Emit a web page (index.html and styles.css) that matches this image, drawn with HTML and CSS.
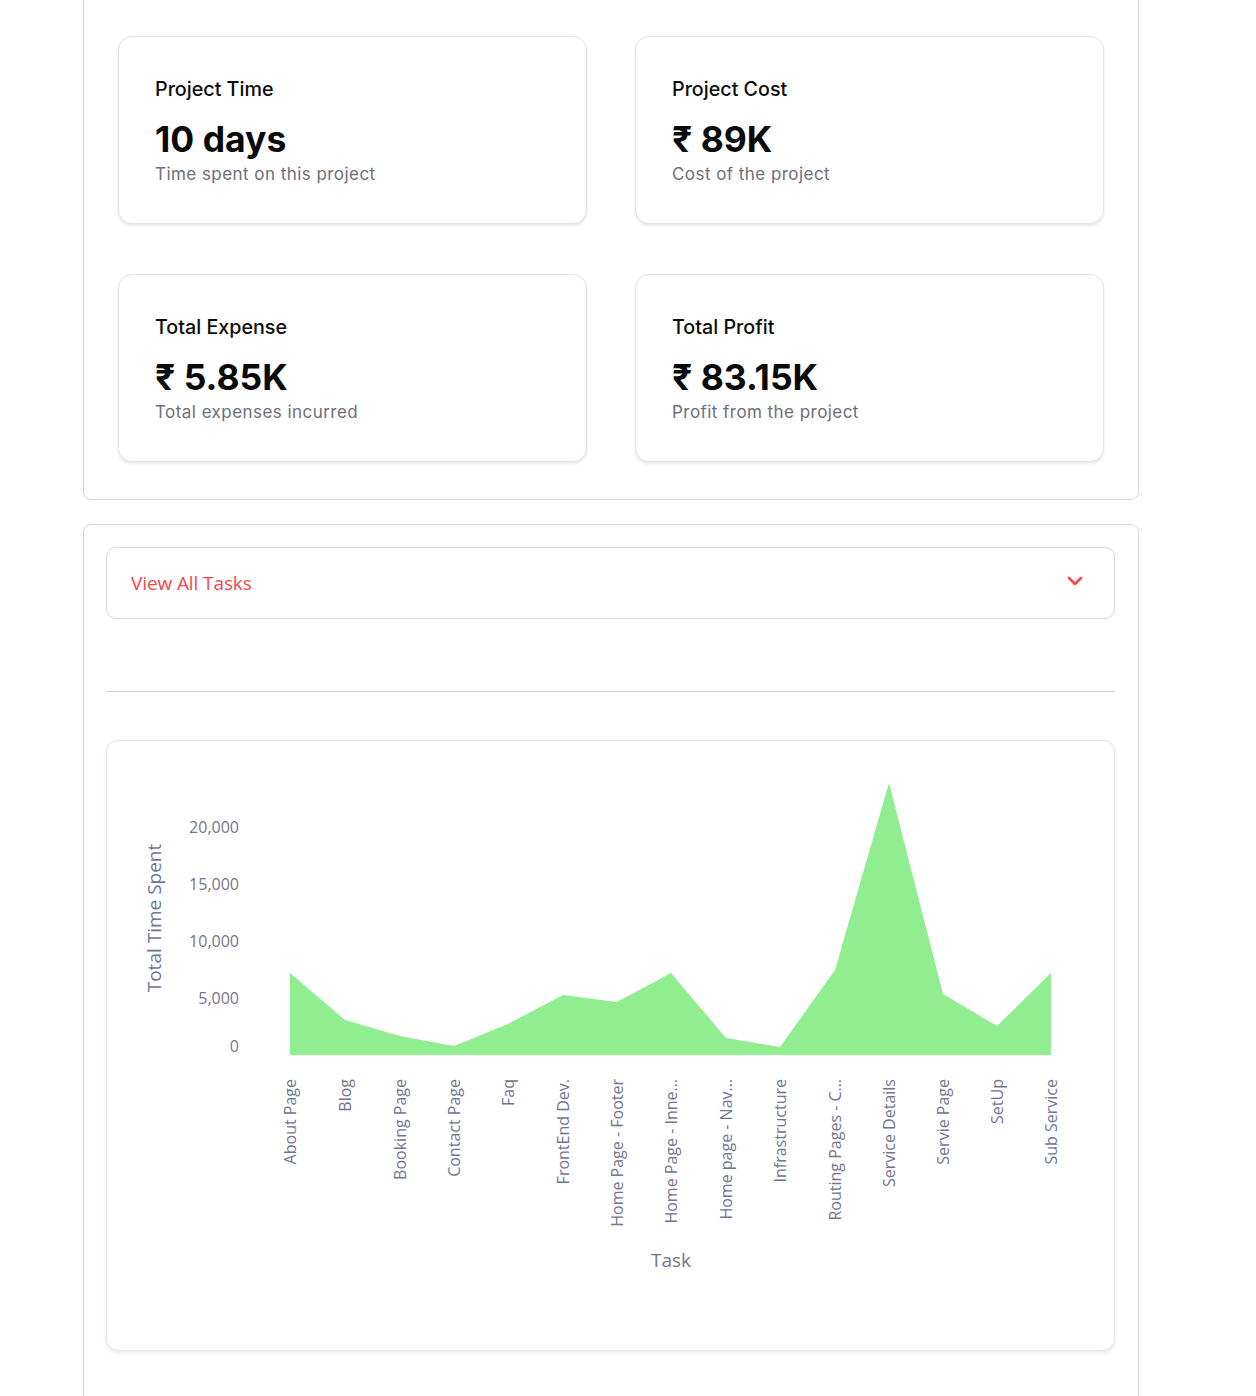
FILE: index.html
```html
<!DOCTYPE html>
<html lang="en">
<head>
<meta charset="utf-8">
<title>Project Overview</title>
<link rel="stylesheet" href="styles.css">
</head>
<body>
<div class="page">
  <section class="panel stats">
    <div class="card">
      <div class="card-title">Project Time</div>
      <div class="card-value">10 days</div>
      <div class="card-sub">Time spent on this project</div>
    </div>
    <div class="card">
      <div class="card-title">Project Cost</div>
      <div class="card-value">₹ 89K</div>
      <div class="card-sub">Cost of the project</div>
    </div>
    <div class="card">
      <div class="card-title">Total Expense</div>
      <div class="card-value">₹ 5.85K</div>
      <div class="card-sub">Total expenses incurred</div>
    </div>
    <div class="card">
      <div class="card-title">Total Profit</div>
      <div class="card-value">₹ 83.15K</div>
      <div class="card-sub">Profit from the project</div>
    </div>
  </section>

  <section class="panel tasks">
    <div class="dropdown">
      <span class="dropdown-label">View All Tasks</span>
      <svg class="chevron" width="16" height="10" viewBox="0 0 16 10"><path d="M2 2 L8 8 L14 2" fill="none" stroke="#f5474d" stroke-width="2.6" stroke-linecap="round" stroke-linejoin="round"/></svg>
    </div>
    <hr class="divider">
    <div class="chart-card">
      <svg class="chart" width="1008" height="609" viewBox="0 0 1008 609">
        <polygon class="area" points="183,232 238,279 293,295 347,305 401,283 456,254 510,261 564,232 619,297 673,306 728,229 782,42 836,253 890,285 944,232 944,314 183,314"/>
        <g class="yticks">
          <text x="132" y="92">20,000</text>
          <text x="132" y="149">15,000</text>
          <text x="132" y="206">10,000</text>
          <text x="132" y="263">5,000</text>
          <text x="132" y="311">0</text>
        </g>
        <text class="axis-title" transform="translate(54,177) rotate(-90)">Total Time Spent</text>
        <g class="xticks">
          <text transform="translate(189,338) rotate(-90)">About Page</text>
          <text transform="translate(244,338) rotate(-90)">Blog</text>
          <text transform="translate(299,338) rotate(-90)">Booking Page</text>
          <text transform="translate(353,338) rotate(-90)">Contact Page</text>
          <text transform="translate(407,338) rotate(-90)">Faq</text>
          <text transform="translate(462,338) rotate(-90)">FrontEnd Dev.</text>
          <text transform="translate(516,338) rotate(-90)">Home Page - Footer</text>
          <text transform="translate(570,338) rotate(-90)">Home Page - Inne…</text>
          <text transform="translate(625,338) rotate(-90)">Home page - Nav…</text>
          <text transform="translate(679,338) rotate(-90)">Infrastructure</text>
          <text transform="translate(734,338) rotate(-90)">Routing Pages - C…</text>
          <text transform="translate(788,338) rotate(-90)">Service Details</text>
          <text transform="translate(842,338) rotate(-90)">Servie Page</text>
          <text transform="translate(896,338) rotate(-90)">SetUp</text>
          <text transform="translate(950,338) rotate(-90)">Sub Service</text>
        </g>
        <text class="axis-title" x="564" y="526">Task</text>
      </svg>
    </div>
  </section>
</div>
</body>
</html>
```

FILE: styles.css
```css
* { box-sizing: border-box; }
html, body { margin: 0; padding: 0; background: #ffffff; }
body { font-family: Inter, "Noto Sans", sans-serif; color: #111; }

.page {
  margin-left: 83px;
  width: 1056px;
}

.panel {
  border: 1px solid #dadada;
  border-radius: 8px;
  background: #fff;
}

.stats {
  margin-top: -12px;
  padding: 47px 34px 37px 34px;
  display: grid;
  grid-template-columns: 1fr 1fr;
  column-gap: 48px;
  row-gap: 50px;
}

.card {
  border: 1px solid #e4e4e4;
  border-radius: 14px;
  box-shadow: 0 2px 3px rgba(0, 0, 0, 0.09);
  padding: 40px 36px 37px 36px;
  background: #fff;
}

.card-title {
  font-size: 19.7px;
  font-weight: 500;
  line-height: 24px;
  color: #0c0c0c;
}

.card-value {
  margin-top: 18px;
  font-size: 35.5px;
  font-weight: 700;
  line-height: 41px;
  color: #0a0a0a;
}

.card-sub {
  margin-top: 2px;
  font-size: 17px;
  line-height: 24px;
  color: #6e6e7a;
  letter-spacing: 0.45px;
}

.tasks {
  margin-top: 24px;
  padding: 22px 23px 80px 22px;
}

.dropdown {
  height: 72px;
  border: 1px solid #d8d8d8;
  border-radius: 10px;
  padding: 0 31px 0 24px;
  display: flex;
  align-items: center;
  justify-content: space-between;
}

.dropdown-label {
  font-family: "Open Sans", "Noto Sans", sans-serif;
  font-size: 19px;
  color: #f5474d;
  letter-spacing: -0.1px;
}

.chevron { margin-bottom: 4px; }

.divider {
  margin: 72px 0 0 0;
  border: none;
  border-top: 1px solid #d6d6d6;
  height: 0;
}

.chart-card {
  margin-top: 48px;
  height: 611px;
  border: 1px solid #e6e6e6;
  border-radius: 12px;
  box-shadow: 0 2px 4px rgba(0, 0, 0, 0.08);
  background: #fff;
  overflow: hidden;
}

.chart { display: block; }

.area { fill: #90ee90; }

.chart text {
  font-family: "Open Sans", "Noto Sans", sans-serif;
  fill: #72768c;
}

.yticks text {
  font-size: 16px;
  text-anchor: end;
}

.xticks text {
  font-size: 16px;
  text-anchor: end;
}

.axis-title {
  font-size: 19px;
  text-anchor: middle;
}
```
